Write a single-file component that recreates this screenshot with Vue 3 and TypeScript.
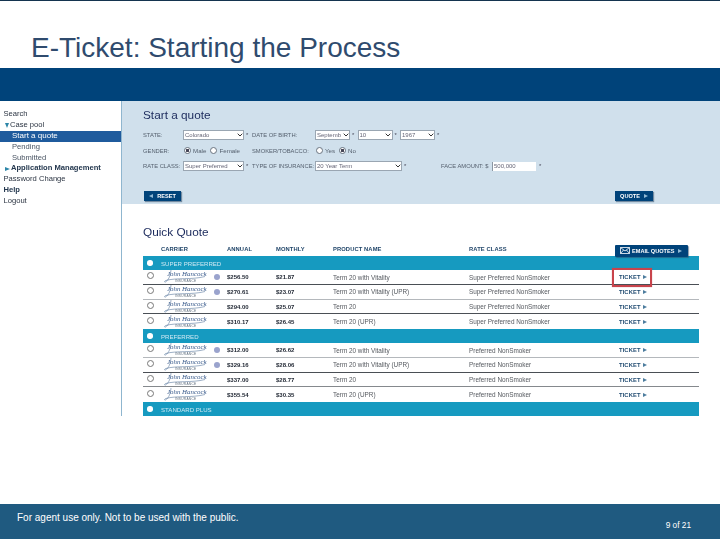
<script setup lang="ts">
interface Quote { annual: string; monthly: string; product: string; dot: boolean; line: string; marked?: boolean }
interface Group { name: string; rate: string; quotes: Quote[] }

const groups: Group[] = [
  {
    name: 'SUPER PREFERRED',
    rate: 'Super Preferred NonSmoker',
    quotes: [
      { annual: '$256.50', monthly: '$21.87', product: 'Term 20 with Vitality', dot: true, line: 'dark', marked: true },
      { annual: '$270.61', monthly: '$23.07', product: 'Term 20 with Vitality (UPR)', dot: true, line: 'light' },
      { annual: '$294.00', monthly: '$25.07', product: 'Term 20', dot: false, line: 'dark' },
      { annual: '$310.17', monthly: '$26.45', product: 'Term 20 (UPR)', dot: false, line: 'none' },
    ],
  },
  {
    name: 'PREFERRED',
    rate: 'Preferred NonSmoker',
    quotes: [
      { annual: '$312.00', monthly: '$26.62', product: 'Term 20 with Vitality', dot: true, line: 'light' },
      { annual: '$329.16', monthly: '$28.06', product: 'Term 20 with Vitality (UPR)', dot: true, line: 'dark' },
      { annual: '$337.00', monthly: '$28.77', product: 'Term 20', dot: false, line: 'mid' },
      { annual: '$355.54', monthly: '$30.35', product: 'Term 20 (UPR)', dot: false, line: 'none' },
    ],
  },
  { name: 'STANDARD PLUS', rate: '', quotes: [] },
]
</script>

<template>
  <div class="slide">
    <div class="topline"></div>
    <h1 class="title">E-Ticket: Starting the Process</h1>
    <div class="shot">
      <div class="banner"></div>
      <div class="app">
        <nav class="nav">
          <div class="nav-row">Search</div>
          <div class="nav-row tree"><i class="tri-down"></i>Case pool</div>
          <div class="nav-row sub active">Start a quote</div>
          <div class="nav-row sub">Pending</div>
          <div class="nav-row sub">Submitted</div>
          <div class="nav-row tree strong"><i class="tri-right"></i>Application Management</div>
          <div class="nav-row">Password Change</div>
          <div class="nav-row strong">Help</div>
          <div class="nav-row">Logout</div>
        </nav>
        <main class="main">
          <section class="panel">
            <h2 class="heading">Start a quote</h2>
            <div class="form">
              <span class="lab">STATE:</span>
              <span class="ctl">
                <span class="selw w61"><select class="sel"><option>Colorado</option></select><svg class="chev" viewBox="0 0 6 4" width="6" height="4"><path d="M.7.7 3 3l2.300-2.300" fill="none" stroke="#333" stroke-width="1" /></svg></span><b class="star">*</b>
              </span>
              <span class="lab">DATE OF BIRTH:</span>
              <span class="ctl">
                <span class="selw w35"><select class="sel"><option>September</option></select><svg class="chev" viewBox="0 0 6 4" width="6" height="4"><path d="M.7.7 3 3l2.300-2.300" fill="none" stroke="#333" stroke-width="1" /></svg></span><b class="star">*</b>
                <span class="selw w35 gap2"><select class="sel"><option>10</option></select><svg class="chev" viewBox="0 0 6 4" width="6" height="4"><path d="M.7.7 3 3l2.300-2.300" fill="none" stroke="#333" stroke-width="1" /></svg></span><b class="star">*</b>
                <span class="selw w35 gap2"><select class="sel"><option>1967</option></select><svg class="chev" viewBox="0 0 6 4" width="6" height="4"><path d="M.7.7 3 3l2.300-2.300" fill="none" stroke="#333" stroke-width="1" /></svg></span><b class="star">*</b>
              </span>

              <span class="lab">GENDER:</span>
              <span class="ctl radios">
                <i class="radio on"></i><span class="opt">Male</span>
                <i class="radio"></i><span class="opt">Female</span>
              </span>
              <span class="lab">SMOKER/TOBACCO:</span>
              <span class="ctl radios">
                <i class="radio"></i><span class="opt">Yes</span>
                <i class="radio on"></i><span class="opt">No</span>
              </span>

              <span class="lab">RATE CLASS:</span>
              <span class="ctl">
                <span class="selw w61"><select class="sel"><option>Super Preferred</option></select><svg class="chev" viewBox="0 0 6 4" width="6" height="4"><path d="M.7.7 3 3l2.300-2.300" fill="none" stroke="#333" stroke-width="1" /></svg></span><b class="star">*</b>
              </span>
              <span class="lab">TYPE OF INSURANCE:</span>
              <span class="ctl">
                <span class="selw w87"><select class="sel"><option>20 Year Term</option></select><svg class="chev" viewBox="0 0 6 4" width="6" height="4"><path d="M.7.7 3 3l2.300-2.300" fill="none" stroke="#333" stroke-width="1" /></svg></span><b class="star">*</b>
                <span class="lab face">FACE AMOUNT: $</span>
                <input class="amount" value="500,000" /><b class="star star-amount">*</b>
              </span>
            </div>
            <div class="actions">
              <button class="btn reset"><i class="arrow-left"></i>RESET</button>
              <button class="btn quote">QUOTE<i class="arrow-right"></i></button>
            </div>
          </section>

          <section class="quick">
            <h2 class="heading">Quick Quote</h2>
            <div class="table">
              <div class="grid head">
                <span></span>
                <span class="hcell">CARRIER</span>
                <span></span>
                <span class="hcell">ANNUAL</span>
                <span class="hcell">MONTHLY</span>
                <span class="hcell">PRODUCT NAME</span>
                <span class="hcell">RATE CLASS</span>
                <span class="email-cell">
                  <button class="btn email">
                    <svg class="env" viewBox="0 0 10 7" width="10" height="7">
                      <path d="M.5.5h9v6h-9zM.5.5 5 4l4.500-3.500M.5 6.500 3.600 3M9.500 6.500 6.400 3" fill="none" stroke="#fff" stroke-width=".8" />
                    </svg>
                    EMAIL QUOTES<i class="arrow-right"></i>
                  </button>
                </span>
              </div>
              <template v-for="g in groups" :key="g.name">
                <div class="band">
                  <i class="band-dot"></i>
                  <span>{{ g.name }}</span>
                </div>
                <div v-for="q in g.quotes" :key="q.annual" class="grid row" :class="q.line">
                  <span class="cell-radio"><i class="radio big"></i></span>
                  <span class="logo">
                    <svg class="swoosh" viewBox="0 0 42 15" width="42" height="15">
                      <path d="M7 1C6.500 6 5 11 1.500 13c-1.200.6-1.300-1 .3-1.500C12 8.500 28 11 41 7.500" fill="none" stroke="#5c7aa0" stroke-width=".6" />
                    </svg>
                    <span class="sig">John Hancock</span>
                    <span class="ins">INSURANCE</span>
                  </span>
                  <span class="cell-dot"><i v-if="q.dot" class="info"></i></span>
                  <span class="num">{{ q.annual }}</span>
                  <span class="num">{{ q.monthly }}</span>
                  <span class="txt">{{ q.product }}</span>
                  <span class="txt">{{ g.rate }}</span>
                  <span class="ticket">
                    TICKET<i class="arrow-right dark"></i>
                    <i v-if="q.marked" class="mark"></i>
                  </span>
                </div>
              </template>
            </div>
          </section>
        </main>
      </div>
    </div>
    <div class="spacer"></div>
    <footer class="footer">
      <span class="note">For agent use only. Not to be used with the public.</span>
      <span class="page">9 of 21</span>
    </footer>
  </div>
</template>

<style>
html, body { margin: 0; background: #fff; }
</style>

<style scoped>
.slide {
  width: 720px;
  height: 540px;
  display: flex;
  flex-direction: column;
  background: #fff;
  font-family: "Liberation Sans", Arial, sans-serif;
  overflow: hidden;
}
.topline { height: 1px; background: #14344f; flex: none; }
.title {
  flex: none;
  height: 67px;
  margin: 0;
  padding: 29px 0 0 31px;
  box-sizing: border-box;
  font-size: 28px;
  line-height: 36px;
  font-weight: 400;
  color: #2f4b6e;
}
.shot { flex: none; filter: blur(0.35px); }
.banner { height: 33px; background: #00437a; }
.app { display: flex; height: 315px; }
.nav {
  width: 121px;
  flex: none;
  padding-top: 8px;
  box-sizing: content-box;
  border-right: 1px solid #8fb6cf;
  font-size: 7.6px;
  color: #2b3442;
}
.nav-row { height: 10.9px; line-height: 10.9px; padding-left: 3.5px; white-space: nowrap; display: flex; align-items: center; }
.nav-row.tree { padding-left: 5px; gap: 1px; }
.nav-row.sub { padding-left: 12px; color: #4a5564; }
.nav-row.strong { font-weight: 700; color: #24384f; }
.nav-row.active { background: #1f5b9d; color: #fff; font-size: 8px; }
.tri-down { width: 0; height: 0; border-left: 2.500px solid transparent; border-right: 2.500px solid transparent; border-top: 5px solid #2d86a8; }
.tri-right { width: 0; height: 0; border-top: 2.500px solid transparent; border-bottom: 2.500px solid transparent; border-left: 5px solid #2d86a8; }

.main { flex: 1; min-width: 0; display: flex; flex-direction: column; }
.panel { flex: none; height: 103px; box-sizing: border-box; background: #d0e0ec; padding: 8px 67px 0 21px; display: flex; flex-direction: column; }
.heading { margin: 0; font-size: 11.8px; line-height: 13px; font-weight: 400; color: #1b2a5c; }
.form {
  margin-top: 8px;
  display: grid;
  grid-template-columns: 40px 69px 63px 1fr;
  grid-auto-rows: 10px;
  row-gap: 5.5px;
  align-items: center;
  font-size: 5.8px;
  color: #55606e;
}
.lab { white-space: nowrap; }
.ctl { display: flex; align-items: center; height: 10px; }
.selw { position: relative; display: block; height: 10px; flex: none; }
.sel {
  display: block;
  width: 100%;
  height: 10px;
  box-sizing: border-box;
  padding: 0 8px 0 1px;
  margin: 0;
  appearance: none;
  font: 6px "Liberation Sans", Arial, sans-serif;
  color: #667;
  border: 1px solid #9aa6b2;
  border-radius: 0;
  background: #fff;
}
.chev { position: absolute; right: 1.500px; top: 3px; pointer-events: none; }
.w61 { width: 61px; }
.w35 { width: 35px; }
.w87 { width: 87px; }
.gap2 { margin-left: 2.500px; }
.star { font-weight: 400; margin-left: 2px; color: #445; width: 3px; }
.face { margin-left: 34px; width: 51px; }
.amount {
  width: 44px;
  height: 9px;
  box-sizing: border-box;
  padding: 0 0 0 1px;
  margin: 0;
  border: 0;
  border-left: 1px solid #8a96a2;
  font: 6px "Liberation Sans", Arial, sans-serif;
  color: #667;
  background: #fff;
}
.star-amount { margin-left: 3px; }
.radios { gap: 2px; padding-left: 1px; }
.opt { margin-right: 2px; font-size: 6.2px; }
.radio {
  width: 7px;
  height: 7px;
  box-sizing: border-box;
  flex: none;
  border: 0.8px solid #6a7480;
  border-radius: 50%;
  background: #fff;
  display: inline-block;
}
.radio.on { background: radial-gradient(circle, #445 0 1.400px, #fff 1.700px); }
.radio.big { border-color: #777; }
.actions { margin-top: auto; padding-bottom: 3px; display: flex; justify-content: space-between; padding-left: 1px; }
.btn {
  height: 10px;
  padding: 0;
  margin: 0;
  border: 0;
  background: #00437a;
  color: #fff;
  font: 700 5.6px/10px "Liberation Sans", Arial, sans-serif;
  box-shadow: 1px 1px 1px rgba(40, 70, 100, .55);
  display: inline-flex;
  align-items: center;
  justify-content: center;
  gap: 2px;
  white-space: nowrap;
}
.reset { width: 37px; }
.quote { width: 38px; }
.arrow-right { width: 0; height: 0; border-top: 2px solid transparent; border-bottom: 2px solid transparent; border-left: 4px solid #8fb8d4; margin-left: 2px; }
.arrow-right.dark { border-left-color: #4d7d9e; }
.arrow-left { width: 0; height: 0; border-top: 2px solid transparent; border-bottom: 2px solid transparent; border-right: 4px solid #8fb8d4; margin-right: 2px; }

.quick { padding: 22px 21px 0; flex: 1; }
.table { width: 556px; margin-top: 1px; }
.grid {
  display: grid;
  grid-template-columns: 18px 51px 15px 49px 57px 136px 150px 80px;
  align-items: center;
}
.head { height: 15px; padding-bottom: 1px; box-sizing: content-box; }
.hcell { font-size: 5.8px; font-weight: 700; color: #1f4468; letter-spacing: .1px; white-space: nowrap; }
.email-cell { margin-left: -4px; }
.btn.email { height: 12px; padding: 0 0 0 5px; width: 73px; gap: 2px; border-radius: 1px; font-size: 5.6px; justify-content: flex-start; }
.env { flex: none; }
.band {
  height: 14px;
  background: #169ac0;
  display: flex;
  align-items: center;
  gap: 8.500px;
  padding-left: 4px;
  font-size: 6.1px;
  color: #cfe9f3;
}
.band-dot { width: 5.500px; height: 5.500px; border-radius: 50%; background: #fff; flex: none; }
.row { height: 14.75px; box-sizing: border-box; overflow: visible; }
.row.dark { border-bottom: 1px solid #4a4f55; }
.row.light { border-bottom: 1px solid #b4b8bc; }
.row.mid { border-bottom: 1px solid #85898d; }
.row.none { border-bottom: 0; }
.cell-radio { display: flex; justify-content: center; padding-right: 3px; margin-top: -3px; }
.logo { position: relative; height: 14px; display: block; margin-left: 3px; color: #3e5f8a; overflow: visible; }
.swoosh { position: absolute; left: 0; top: -1px; }
.sig {
  position: absolute;
  left: 3px;
  top: -1px;
  font: italic 6.9px/9px "Liberation Serif", "Times New Roman", serif;
  white-space: nowrap;
  color: #36588a;
}
.ins { position: absolute; left: 11px; top: 9px; font-size: 3.200px; line-height: 4px; letter-spacing: .3px; color: #5b6a7a; }
.cell-dot { display: flex; justify-content: flex-start; padding-left: 2px; }
.info { width: 6px; height: 6px; border-radius: 50%; background: #9aa3cd; display: block; }
.num { font-size: 6px; font-weight: 700; color: #1d2430; white-space: nowrap; }
.txt { font-size: 6.4px; color: #55595f; white-space: nowrap; }
.ticket {
  position: relative;
  font-size: 5.8px;
  font-weight: 700;
  letter-spacing: .1px;
  color: #1f4a70;
  display: flex;
  align-items: center;
  white-space: nowrap;
}
.mark {
  position: absolute;
  left: -7px;
  top: -6.500px;
  width: 40px;
  height: 19px;
  box-sizing: border-box;
  border: 2px solid #c8444c;
  box-shadow: 0 0 1px rgba(200, 70, 80, .6);
}

.spacer { flex: 1; }
.footer {
  flex: none;
  height: 35px;
  margin-bottom: 1px;
  background: #1f5a80;
  color: #fff;
  display: flex;
  justify-content: space-between;
  padding: 7px 29px 0 17px;
  box-sizing: border-box;
}
.note { font-size: 10px; line-height: 13px; }
.page { font-size: 8.3px; line-height: 10px; margin-top: 9px; }
</style>
